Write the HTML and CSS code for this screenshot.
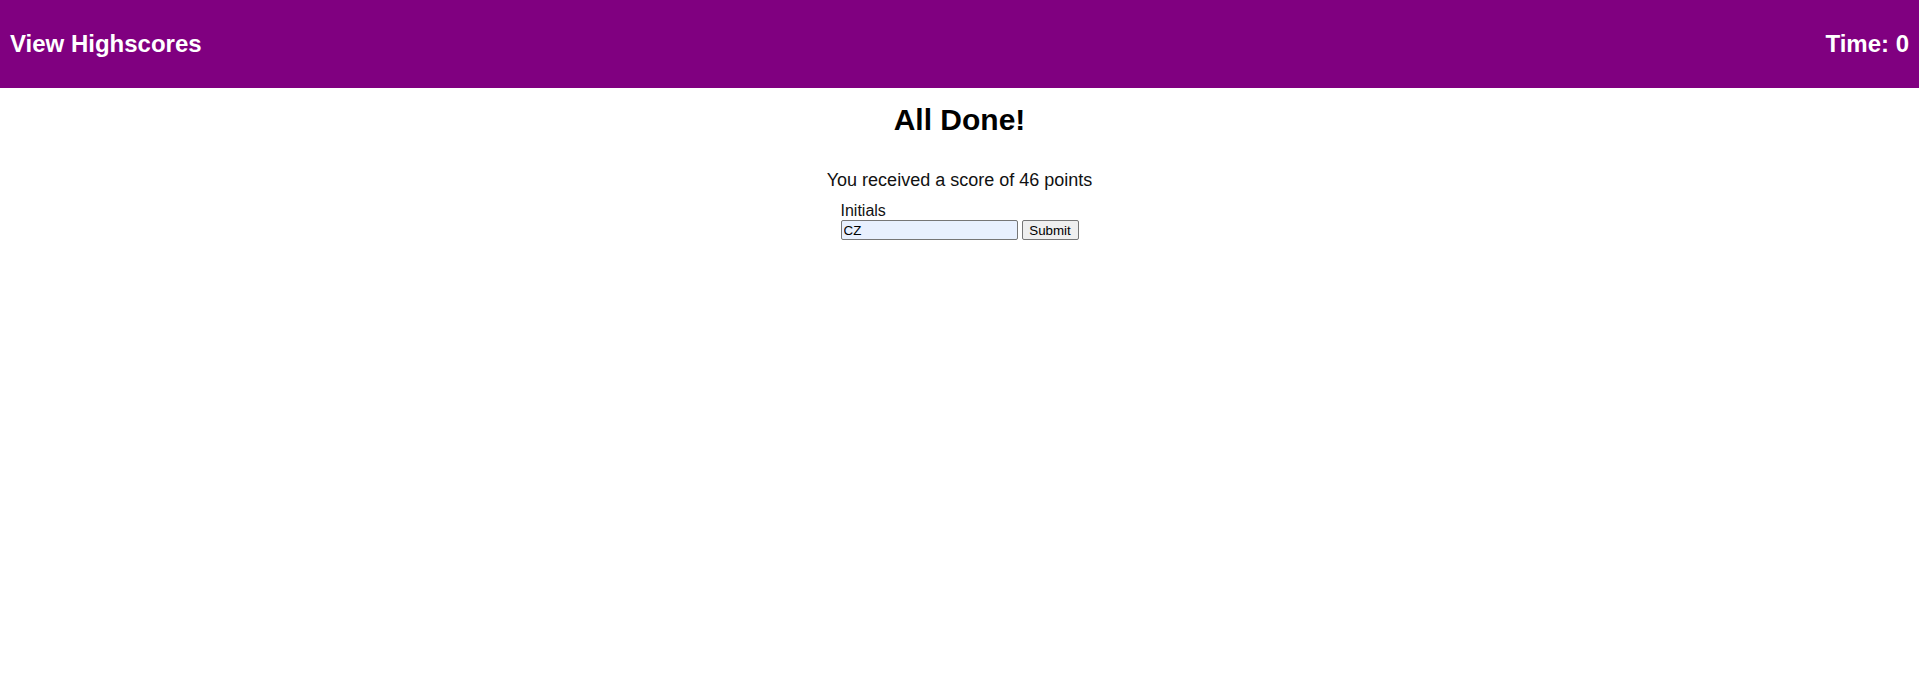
FILE: index.html
```html
<!DOCTYPE html>
<html lang="en">
<head>
<meta charset="utf-8">
<title>Quiz</title>
<link rel="stylesheet" href="styles.css">
</head>
<body>
<header class="topbar">
  <a class="topbar-link" href="#">View Highscores</a>
  <span class="topbar-time">Time: 0</span>
</header>
<main class="done">
  <h1 class="done-title">All Done!</h1>
  <p class="done-score">You received a score of 46 points</p>
  <form class="done-form">
    <label class="done-label" for="initials">Initials</label>
    <div class="done-row">
      <input class="done-input" id="initials" type="text" value="CZ">
      <button class="done-button" type="button">Submit</button>
    </div>
  </form>
</main>
</body>
</html>
```

FILE: styles.css
```css
html, body {
  margin: 0;
  padding: 0;
  background: #ffffff;
  font-family: "Liberation Sans", Arial, sans-serif;
  color: #000;
}

.topbar {
  height: 88px;
  background: #800080;
  display: flex;
  align-items: center;
  justify-content: space-between;
  padding: 0 10px;
  box-sizing: border-box;
}

.topbar-link,
.topbar-time {
  color: #ffffff;
  font-size: 24px;
  font-weight: bold;
  text-decoration: none;
}

.done {
  display: flex;
  flex-direction: column;
  align-items: center;
  padding-top: 15px;
}

.done-title {
  margin: 0;
  font-size: 30px;
  font-weight: bold;
}

.done-score {
  margin: 33px 0 0;
  font-size: 18px;
  color: #111;
}

.done-form {
  margin-top: 11px;
  display: flex;
  flex-direction: column;
  font-size: 16px;
}

.done-label {
  display: block;
  color: #111;
}

.done-row {
  display: flex;
  align-items: center;
  gap: 4px;
}

.done-input {
  box-sizing: border-box;
  width: 177px;
  height: 20px;
  margin: 0;
  padding: 1px 2px;
  border: 1px solid #767676;
  border-radius: 2px;
  background: #e8f0fe;
  font-family: "Liberation Sans", Arial, sans-serif;
  font-size: 13.333px;
  color: #000;
}

.done-button {
  box-sizing: border-box;
  width: 57px;
  height: 20px;
  margin: 0;
  padding: 1px 6px;
  border: 1px solid #767676;
  border-radius: 2px;
  background: #efefef;
  font-family: "Liberation Sans", Arial, sans-serif;
  font-size: 13.333px;
  color: #000;
}
```
